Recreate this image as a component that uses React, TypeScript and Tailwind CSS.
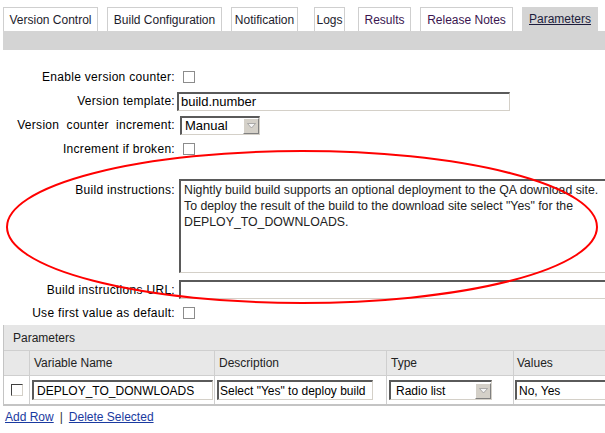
import React from "react";

// left edge and width of each tab, as in the screenshot
const TABS = [
  { label: "Version Control", w: "w-[95px]", ml: "ml-[3px]", color: "text-[#1c1c2c]" },
  { label: "Build Configuration", w: "w-[115px]", ml: "ml-[9px]", color: "text-[#1c1c2c]" },
  { label: "Notification", w: "w-[67px]", ml: "ml-[9px]", color: "text-[#1c1c2c]" },
  { label: "Logs", w: "w-[31px]", ml: "ml-[16px]", color: "text-[#1c1c2c]" },
  { label: "Results", w: "w-[53px]", ml: "ml-[13px]", color: "text-[#3a1650]" },
  { label: "Release Notes", w: "w-[93px]", ml: "ml-[9px]", color: "text-[#3a1650]" },
];

const inset =
  "border-t-2 border-l-2 border-b border-r border-t-[#5a5a5a] border-l-[#5a5a5a] border-b-[#d4d0c8] border-r-[#d4d0c8] bg-white";

function Check({ dark = false }: { dark?: boolean }) {
  return (
    <span
      className={`inline-block h-[12px] w-[12px] bg-white ${
        dark
          ? "border-t border-l border-b border-r border-t-[#404040] border-l-[#404040] border-b-[#d4d0c8] border-r-[#d4d0c8]"
          : "border border-[#8c8c8c]"
      }`}
    />
  );
}

function DropArrow() {
  return (
    <span className="flex h-[16px] w-[16px] shrink-0 items-center justify-center border border-t-white border-l-white border-b-[#808080] border-r-[#808080] bg-[#d4d0c8]">
      <svg width="9" height="6" viewBox="0 0 9 6">
        <path d="M0.5 0.5 L8.5 0.5 L4.5 5 Z" fill="#f4f4f4" stroke="#9a9a9a" strokeWidth="0.8" />
      </svg>
    </span>
  );
}

function Row({ label, children, className = "" }: { label: string; children: React.ReactNode; className?: string }) {
  return (
    <div className={`grid grid-cols-[176px_1fr] items-center ${className}`}>
      <span className="whitespace-pre pr-[1px] text-right tracking-[0.3px]">{label}</span>
      <div className="flex items-center">{children}</div>
    </div>
  );
}

export default function App() {
  return (
    <div
      className="relative h-[433px] w-[605px] overflow-hidden bg-white text-[12px] text-black"
      style={{ fontFamily: '"Liberation Sans", Arial, sans-serif' }}
    >
      {/* Tabs */}
      <div className="flex items-end pt-[7px]">
        {TABS.map((t) => (
          <span
            key={t.label}
            className={`flex h-[24px] items-center justify-center whitespace-nowrap border border-b-0 border-[#cfcfcf] bg-white ${t.w} ${t.ml} ${t.color}`}
          >
            {t.label}
          </span>
        ))}
        <span className="ml-[9px] flex h-[24px] w-[76px] items-center justify-center bg-[#d4d4d4] text-[#1c1c3c] underline">
          Parameters
        </span>
      </div>
      <div className="ml-[3px] h-[19px] bg-[#d4d4d4]" />

      {/* Form */}
      <div className="pt-[15px]">
        <Row label="Enable version counter:" className="h-[24px]">
          <span className="ml-[7px] flex">
            <Check />
          </span>
        </Row>
        <Row label="Version template:" className="h-[24px]">
          <span className={`ml-[1px] flex h-[19px] w-[333px] items-center pl-[2px] text-[13px] ${inset}`}>build.number</span>
        </Row>
        <Row label="Version  counter  increment:" className="h-[24px]">
          <span className={`ml-[4px] flex h-[19px] w-[80px] items-center justify-between pl-[3px] text-[13px] ${inset}`}>
            Manual
            <DropArrow />
          </span>
        </Row>
        <Row label="Increment if broken:" className="h-[23px]">
          <span className="ml-[7px] flex">
            <Check />
          </span>
        </Row>

        <div className="mt-[19px] grid grid-cols-[176px_1fr]">
          <span className="pr-[1px] pt-[2px] text-right tracking-[0.3px]">Build instructions:</span>
          <div className={`ml-[3px] h-[94px] w-[440px] pl-[3px] pt-[1px] text-[12.3px] leading-[16px] text-[#222] ${inset}`}>
            Nightly build build supports an optional deployment to the QA download site.
            <br />
            To deploy the result of the build to the download site select "Yes" for the
            <br />
            DEPLOY_TO_DOWNLOADS.
          </div>
        </div>

        <Row label="Build instructions URL:" className="mt-[7px] h-[19px]">
          <span className={`ml-[3px] h-[19px] w-[440px] ${inset}`} />
        </Row>
        <Row label="Use first value as default:" className="mt-[5px] h-[18px]">
          <span className="ml-[7px] flex">
            <Check />
          </span>
        </Row>
      </div>

      {/* Parameters table */}
      <div className="ml-[3px] mt-[3px] w-[620px] border-b-2 border-l border-[#c4c4c4]">
        <div className="flex h-[25px] items-center bg-[#e6e6e6] pl-[9px] text-[#222]">Parameters</div>
        <div className="grid h-[25px] grid-cols-[25px_185px_172px_127px_1fr] border-t border-[#cfcfcf] bg-[#e8e8e8] text-[#222]">
          <span />
          <span className="flex items-center border-l border-[#cfcfcf] pl-[4px]">Variable Name</span>
          <span className="flex items-center border-l border-[#cfcfcf] pl-[4px]">Description</span>
          <span className="flex items-center border-l border-[#cfcfcf] pl-[4px]">Type</span>
          <span className="flex items-center border-l border-[#cfcfcf] pl-[3px]">Values</span>
        </div>
        <div className="grid h-[29px] grid-cols-[25px_185px_172px_127px_1fr] border-t border-[#cfcfcf] bg-white text-[12px]">
          <span className="flex items-center pl-[7px]">
            <Check dark />
          </span>
          <span className="flex items-center border-l border-[#cfcfcf] pl-[2px]">
            <span className={`flex h-[20px] w-[181px] items-center pl-[3px] ${inset}`}>DEPLOY_TO_DONWLOADS</span>
          </span>
          <span className="flex min-w-0 items-center border-l border-[#cfcfcf] pl-[2px]">
            <span className={`flex h-[20px] w-[156px] items-center overflow-hidden whitespace-nowrap pl-[1px] ${inset}`}>
              Select "Yes" to deploy build
            </span>
          </span>
          <span className="flex items-center border-l border-[#cfcfcf] pl-[2px]">
            <span className={`flex h-[20px] w-[103px] items-center justify-between pl-[5px] ${inset}`}>
              Radio list
              <DropArrow />
            </span>
          </span>
          <span className="flex items-center border-l border-[#cfcfcf] pl-[1px]">
            <span className={`flex h-[20px] w-[120px] items-center pl-[2px] ${inset}`}>No, Yes</span>
          </span>
        </div>
      </div>

      <div className="mt-[2px] flex items-center gap-[6px] pl-[5px] text-[#1a3aa0]">
        <span className="underline">Add Row</span>
        <span className="text-[#333]">|</span>
        <span className="underline">Delete Selected</span>
      </div>

      {/* red annotation ellipse */}
      <svg className="pointer-events-none absolute left-0 top-0" width="605" height="433">
        <ellipse cx="302" cy="227" rx="295" ry="76" fill="none" stroke="#ff0000" strokeWidth="2" />
      </svg>
    </div>
  );
}
